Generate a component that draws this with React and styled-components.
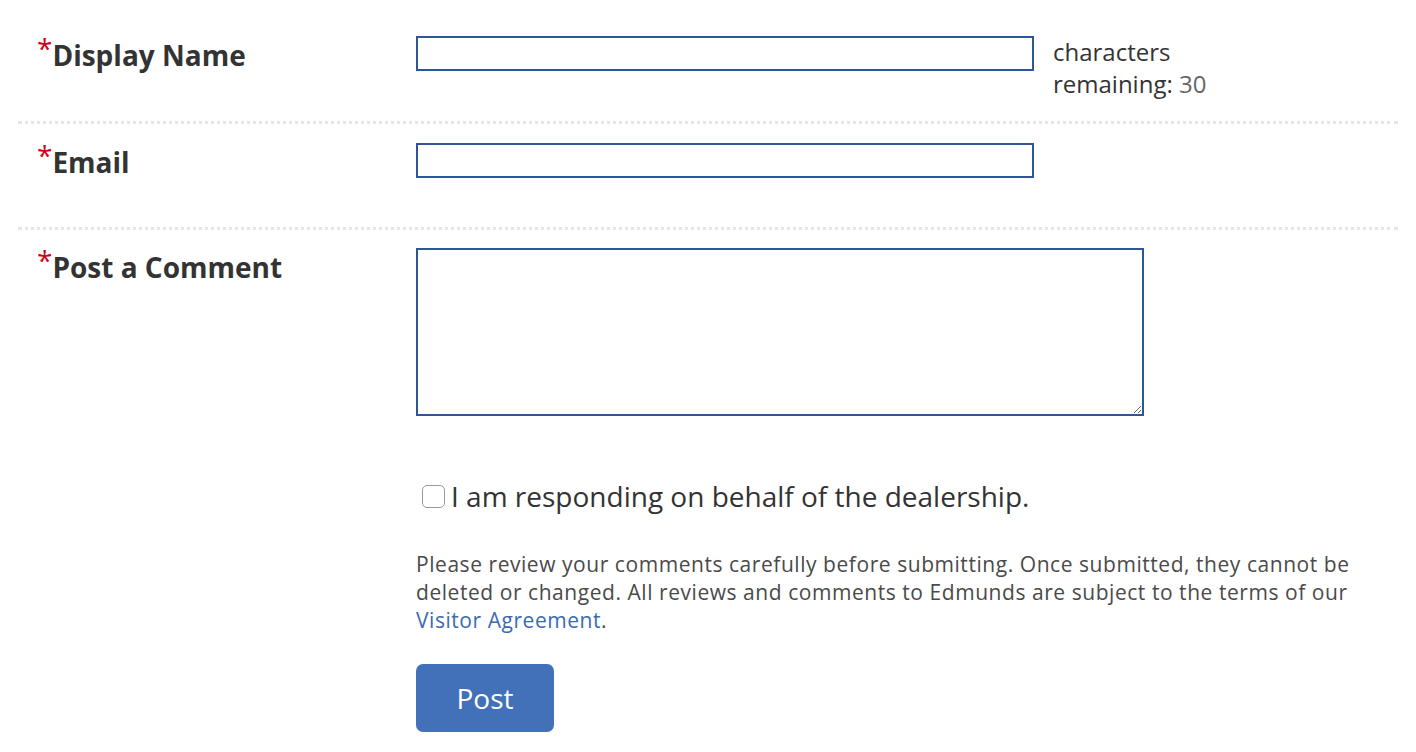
import React, { useState } from 'react';
import styled, { createGlobalStyle } from 'styled-components';

// global page reset
const GlobalStyle = createGlobalStyle`
  body {
    margin: 0;
    background: #fff;
    font-family: "Open Sans", "Liberation Sans", sans-serif;
    color: #333;
  }
`;

const MAX_NAME = 30;

// + styles
const Form = styled.form`
  padding: 17px 18px 0;
`;

const Row = styled.div`
  display: grid;
  grid-template-columns: 398px 1fr;
  align-items: start;
  padding-top: ${p => p.$top || 19}px;
  min-height: ${p => p.$min || 0}px;
  box-sizing: border-box;
  border-bottom: ${p => (p.$last ? 'none' : '3px dotted #e6e6e6')};
`;

const Label = styled.label`
  padding-left: 19px;
  font-size: 28px;
  font-weight: 700;
  color: #333;
  line-height: normal;
`;

const Required = styled.span`
  color: #d0021b;
  font-weight: 400;
  vertical-align: 7px;
  line-height: 0;
`;

const Field = styled.div`
  display: flex;
  align-items: flex-start;
  gap: 19px;
`;

const TextInput = styled.input`
  width: 618px;
  height: 35px;
  box-sizing: border-box;
  border: 2px solid #2e5597;
  border-radius: 0;
  padding: 0 8px;
  font: inherit;
  font-size: 20px;
  outline: none;
`;

const Counter = styled.div`
  width: 175px;
  font-size: 24px;
  line-height: 32px;
  color: #333;

  span {
    color: #666;
  }
`;

const Stack = styled.div`
  display: flex;
  flex-direction: column;
  align-items: flex-start;
`;

const TextArea = styled.textarea`
  display: block;
  width: 728px;
  height: 168px;
  box-sizing: border-box;
  border: 2px solid #2e5597;
  border-radius: 0;
  padding: 6px 8px;
  font: inherit;
  font-size: 20px;
  outline: none;
`;

const CheckLabel = styled.label`
  display: flex;
  align-items: center;
  margin-top: 62px;
  font-size: 28px;
  line-height: 36px;
  color: #333;
  cursor: pointer;
`;

const CheckBox = styled.input`
  appearance: none;
  width: 23px;
  height: 23px;
  margin: 1px 6px 0 6px;
  border: 1px solid #9a9a9a;
  border-radius: 5px;
  background: #fff;
  box-sizing: border-box;

  &:checked {
    background: #4271b9;
    border-color: #4271b9;
  }
`;

const Note = styled.p`
  max-width: 950px;
  margin: 36px 0 0;
  font-size: 21px;
  letter-spacing: 0.55px;
  line-height: 28px;
  color: #4a4a4a;

  a {
    color: #3b6ab3;
    text-decoration: none;
  }
`;

const Button = styled.button`
  margin-top: 30px;
  width: 138px;
  height: 68px;
  border: none;
  border-radius: 7px;
  background: #4271b9;
  color: #fff;
  font: inherit;
  font-size: 28px;
  cursor: pointer;
`;
// - styles

const App = () => {
  const [name, setName] = useState('');

  return (
    <>
      <GlobalStyle />
      <Form onSubmit={e => e.preventDefault()}>
        <Row $min={107}>
          <Label htmlFor="displayName"><Required>*</Required>Display Name</Label>
          <Field>
            <TextInput
              id="displayName"
              maxLength={MAX_NAME}
              value={name}
              onChange={e => setName(e.target.value)}
            />
            <Counter>characters remaining: <span>{MAX_NAME - name.length}</span></Counter>
          </Field>
        </Row>

        <Row $min={106}>
          <Label htmlFor="email"><Required>*</Required>Email</Label>
          <Field>
            <TextInput id="email" type="email" />
          </Field>
        </Row>

        <Row $top={18} $last>
          <Label htmlFor="comment"><Required>*</Required>Post a Comment</Label>
          <Stack>
            <TextArea id="comment" />
            <CheckLabel>
              <CheckBox type="checkbox" />
              I am responding on behalf of the dealership.
            </CheckLabel>
            <Note>
              Please review your comments carefully before submitting. Once submitted, they cannot be
              deleted or changed. All reviews and comments to Edmunds are subject to the terms of our{' '}
              <a href="#visitor-agreement">Visitor Agreement</a>.
            </Note>
            <Button type="submit">Post</Button>
          </Stack>
        </Row>
      </Form>
    </>
  );
};

export default App;
